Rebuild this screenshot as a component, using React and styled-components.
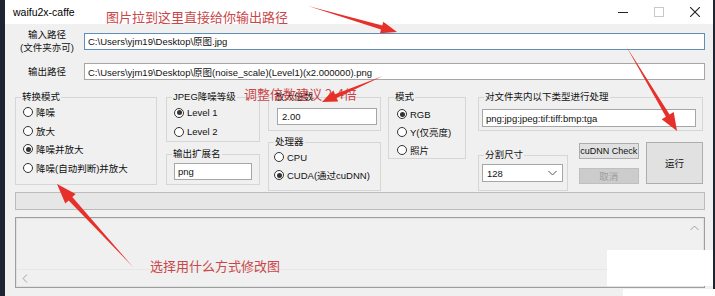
import styled, { createGlobalStyle } from "styled-components";

const GlobalStyle = createGlobalStyle`
  html, body { margin: 0; padding: 0; background: #1f2433; }
  body { font-family: "Liberation Sans", "Noto Sans CJK SC", sans-serif; }
  * { box-sizing: border-box; }
`;

const Frame = styled.div`
  position: relative;
  width: 715px;
  height: 296px;
  display: flex;
  background: #1f2433;
  overflow: hidden;
  font-size: 9.5px;
  color: #111;
`;

const Window = styled.div`
  margin-left: 5px;
  width: 708px;
  background: #f0f0f0;
  display: flex;
  flex-direction: column;
`;

const TitleBar = styled.div`
  height: 24px;
  background: #fff;
  display: flex;
  align-items: center;
  padding-left: 8px;
  font-size: 10.5px;
  color: #000;
`;

const Controls = styled.div`
  margin-left: auto;
  display: flex;
  height: 100%;
`;

const CtrlBtn = styled.div`
  width: 36px;
  height: 100%;
  display: flex;
  align-items: center;
  justify-content: center;
`;

const Body = styled.div`
  padding: 0 8px 0 10px;
  display: flex;
  flex-direction: column;
`;

const PathRow = styled.div`
  display: grid;
  grid-template-columns: 64px 1fr;
  column-gap: 5px;
  align-items: center;
  margin-top: ${p => p.$top}px;
`;

const PathLabel = styled.div`
  text-align: center;
  line-height: 13px;
`;

const TextBox = styled.div`
  height: ${p => p.$h || 17}px;
  background: #fff;
  border: 1px solid ${p => (p.$focus ? "#5d8fbb" : "#a6a6a6")};
  display: flex;
  align-items: center;
  padding-left: ${p => p.$indent || 3}px;
  white-space: nowrap;
  overflow: hidden;
  margin-top: ${p => p.$top || 0}px;
`;

const Options = styled.div`
  margin-top: 10px;
  display: grid;
  grid-template-columns: 142px 94px 112px 76px 228px;
  column-gap: 9px;
  align-items: start;
  & > :nth-child(3) { margin-left: -1px; }
  & > :nth-child(4) { margin-left: -2px; }
  & > :nth-child(5) { margin-left: 3px; }
`;

const Column = styled.div`
  display: flex;
  flex-direction: column;
`;

const Group = styled.fieldset`
  margin: ${p => p.$top || 0}px 0 0 0;
  padding: 0 ${p => p.$padR ?? 6}px 0 ${p => p.$pad ?? 7}px;
  border: 1px solid #d6d6d6;
  height: ${p => p.$h}px;
  width: ${p => (p.$w ? `${p.$w}px` : "auto")};
  min-width: 0;
  & > legend {
    margin-left: ${p => 5 - (p.$pad ?? 7)}px;
  }
`;

const Legend = styled.legend`
  font-size: 9.5px;
  line-height: 14px;
  padding: 0 1px;
  color: #111;
`;

const RadioList = styled.div`
  margin-top: ${p => p.$top || 0}px;
  display: flex;
  flex-direction: column;
`;

const RadioRow = styled.div`
  height: ${p => p.$h || 18}px;
  display: flex;
  align-items: center;
  gap: 3px;
  white-space: nowrap;
`;

const RadioDot = styled.span`
  width: 10px;
  height: 10px;
  border-radius: 50%;
  border: 1px solid #333;
  background: #fff;
  display: flex;
  align-items: center;
  justify-content: center;
  flex-shrink: 0;
  &::after {
    content: "";
    width: 5px;
    height: 5px;
    border-radius: 50%;
    background: ${p => (p.$on ? "#333" : "transparent")};
  }
`;

const BottomRow = styled.div`
  margin-top: 11px;
  display: flex;
  align-items: flex-start;
`;

const ButtonStack = styled.div`
  margin: 1px 0 0 11px;
  display: flex;
  flex-direction: column;
  gap: 9px;
`;

const Button = styled.div`
  width: ${p => p.$w}px;
  height: ${p => p.$h}px;
  margin-left: ${p => p.$left || 0}px;
  background: ${p => (p.$disabled ? "#cccccc" : "#e1e1e1")};
  border: 1px solid ${p => (p.$disabled ? "#bfbfbf" : "#adadad")};
  color: ${p => (p.$disabled ? "#9c9c9c" : "#111")};
  display: flex;
  align-items: center;
  justify-content: center;
  font-size: ${p => p.$fs || 9.5}px;
  white-space: nowrap;
`;

const Select = styled.div`
  margin-top: 2px;
  height: 18px;
  background: #fff;
  border: 1px solid #a6a6a6;
  display: flex;
  align-items: center;
  justify-content: space-between;
  padding: 0 5px 0 4px;
`;

const Progress = styled.div`
  margin-top: 1px;
  height: 18px;
  background: #e6e6e6;
  border: 1px solid #bcbcbc;
`;

const LogBox = styled.div`
  margin-top: 7px;
  height: 71px;
  border: 1px solid #9e9e9e;
  box-shadow: inset 0 0 0 1px #e2e2e2;
  display: grid;
  grid-template-columns: 1fr 17px;
  grid-template-rows: 1fr 16px;
  padding: 1px;
`;

const LogArea = styled.div`
  background: #f0f0f0;
  border-bottom: 1px solid #e6e6e6;
`;

const ScrollCell = styled.div`
  background: #f0f0f0;
  display: flex;
  align-items: ${p => (p.$v ? "flex-start" : "center")};
  justify-content: ${p => (p.$v ? "center" : "flex-start")};
  padding: ${p => (p.$v ? "6px 0 0 0" : "0 0 0 5px")};
  border-bottom: ${p => (p.$v ? "1px solid #e6e6e6" : "none")};
`;

const Note = styled.span`
  position: absolute;
  left: ${p => p.$x}px;
  top: ${p => p.$y}px;
  font-size: 13px;
  line-height: 15px;
  color: #c9474a;
  white-space: nowrap;
  font-family: "Noto Sans CJK SC", sans-serif;
`;

const Patch = styled.div`
  position: absolute;
  left: ${p => p.$x}px;
  top: ${p => p.$y}px;
  width: ${p => p.$w}px;
  height: ${p => p.$h}px;
  background: #fff;
`;

const Overlay = styled.svg`
  position: absolute;
  left: 0;
  top: 0;
  pointer-events: none;
`;

function Radio({ on, children, h }) {
  return (
    <RadioRow $h={h}>
      <RadioDot $on={on} />
      <span>{children}</span>
    </RadioRow>
  );
}

function Arrow({ from, to, head = 16, width = 6, shaft = 2 }) {
  const [tx, ty] = from;
  const [hx, hy] = to;
  const len = Math.hypot(hx - tx, hy - ty);
  const ux = (hx - tx) / len;
  const uy = (hy - ty) / len;
  const nx = -uy;
  const ny = ux;
  const bx = hx - ux * head;
  const by = hy - uy * head;
  const pts = [
    [tx, ty],
    [bx + nx * shaft, by + ny * shaft],
    [bx + nx * width, by + ny * width],
    [hx, hy],
    [bx - nx * width, by - ny * width],
    [bx - nx * shaft, by - ny * shaft],
  ]
    .map(p => p.map(v => v.toFixed(1)).join(","))
    .join(" ");
  return <polygon points={pts} fill="#e8302a" />;
}

const Chevron = ({ d, w = 9, h = 6, color = "#555" }) => (
  <svg width={w} height={h} viewBox={`0 0 ${w} ${h}`}>
    <polyline points={d} fill="none" stroke={color} strokeWidth="1" />
  </svg>
);

export default function App() {
  return (
    <>
      <GlobalStyle />
      <Frame>
        <Window>
          <TitleBar>
            waifu2x-caffe
            <Controls>
              <CtrlBtn>
                <svg width="10" height="10"><line x1="0" y1="5.5" x2="10" y2="5.5" stroke="#222" /></svg>
              </CtrlBtn>
              <CtrlBtn>
                <svg width="10" height="10"><rect x="0.5" y="0.5" width="9" height="9" fill="none" stroke="#c8c8c8" /></svg>
              </CtrlBtn>
              <CtrlBtn>
                <svg width="10" height="10"><path d="M0 0L10 10M10 0L0 10" stroke="#222" strokeWidth="1.1" /></svg>
              </CtrlBtn>
            </Controls>
          </TitleBar>
          <Body>
            <PathRow $top={4}>
              <PathLabel>
                输入路径
                <br />
                (文件夹亦可)
              </PathLabel>
              <TextBox $focus>C:\Users\yjm19\Desktop\原图.jpg</TextBox>
            </PathRow>
            <PathRow $top={9}>
              <PathLabel>输出路径</PathLabel>
              <TextBox>C:\Users\yjm19\Desktop\原图(noise_scale)(Level1)(x2.000000).png</TextBox>
            </PathRow>

            <Options>
              <Column>
                <Group $h={95}>
                  <Legend>转换模式</Legend>
                  <RadioList $top={-1}>
                    <Radio h={18.5}>降噪</Radio>
                    <Radio h={18.5}>放大</Radio>
                    <Radio h={18.5} on>降噪并放大</Radio>
                    <Radio h={18.5}>降噪(自动判断)并放大</Radio>
                  </RadioList>
                </Group>
              </Column>
              <Column>
                <Group $h={52}>
                  <Legend>JPEG降噪等级</Legend>
                  <RadioList $top={-1}>
                    <Radio h={19} on>Level 1</Radio>
                    <Radio h={19}>Level 2</Radio>
                  </RadioList>
                </Group>
                <Group $h={38} $top={5} $padR={7}>
                  <Legend>输出扩展名</Legend>
                  <TextBox $top={2}>png</TextBox>
                </Group>
              </Column>
              <Column>
                <Group $h={41} $pad={8} $padR={3}>
                  <Legend>放大倍数</Legend>
                  <TextBox $top={4} $indent={4}>2.00</TextBox>
                </Group>
                <Group $h={56} $top={4} $pad={5}>
                  <Legend>处理器</Legend>
                  <RadioList $top={-1}>
                    <Radio>CPU</Radio>
                    <Radio on>CUDA(通过cuDNN)</Radio>
                  </RadioList>
                </Group>
              </Column>
              <Column>
                <Group $h={69} $pad={8}>
                  <Legend>模式</Legend>
                  <RadioList $top={1}>
                    <Radio on>RGB</Radio>
                    <Radio>Y(仅亮度)</Radio>
                    <Radio>照片</Radio>
                  </RadioList>
                </Group>
              </Column>
              <Column>
                <Group $h={41} $pad={3}>
                  <Legend>对文件夹内以下类型进行处理</Legend>
                  <TextBox $top={5} $h={18}>png:jpg:jpeg:tif:tiff:bmp:tga</TextBox>
                </Group>
                <BottomRow>
                  <Group $h={43} $w={91} $top={6} $pad={3} $padR={4}>
                    <Legend>分割尺寸</Legend>
                    <Select>
                      128
                      <Chevron d="0.5,1 4.5,5 8.5,1" />
                    </Select>
                  </Group>
                  <ButtonStack>
                    <Button $w={60} $h={16} $fs={9}>cuDNN Check</Button>
                    <Button $w={60} $h={16} $disabled>取消</Button>
                  </ButtonStack>
                  <Button $w={58} $h={42} $left={7}>运行</Button>
                </BottomRow>
              </Column>
            </Options>

            <Progress />
            <LogBox>
              <LogArea />
              <ScrollCell $v>
                <Chevron d="0.5,5 4.5,1 8.5,5" color="#a0a0a0" />
              </ScrollCell>
              <ScrollCell>
                <Chevron w={6} h={9} d="5,0.5 1,4.5 5,8.5" color="#a0a0a0" />
              </ScrollCell>
              <ScrollCell />
            </LogBox>
          </Body>
        </Window>

        <Patch $x={607} $y={250} $w={106} $h={36} />
        <Patch $x={623} $y={289} $w={92} $h={7} />

        <Note $x={106} $y={9}>图片拉到这里直接给你输出路径</Note>
        <Note $x={244} $y={86}>调整倍数建议 2-4倍</Note>
        <Note $x={150} $y={258}>选择用什么方式修改图</Note>

        <Overlay width="715" height="296">
          <Arrow from={[308, 6]} to={[397, 32]} head={16} width={6} shaft={2.2} />
          <Arrow from={[626, 46]} to={[677, 131]} head={18} width={7} shaft={2.2} />
          <Arrow from={[383, 76]} to={[322, 102]} head={15} width={6} shaft={2} />
          <Arrow from={[133, 267]} to={[57, 184]} head={20} width={7} shaft={2.4} />
        </Overlay>
      </Frame>
    </>
  );
}
